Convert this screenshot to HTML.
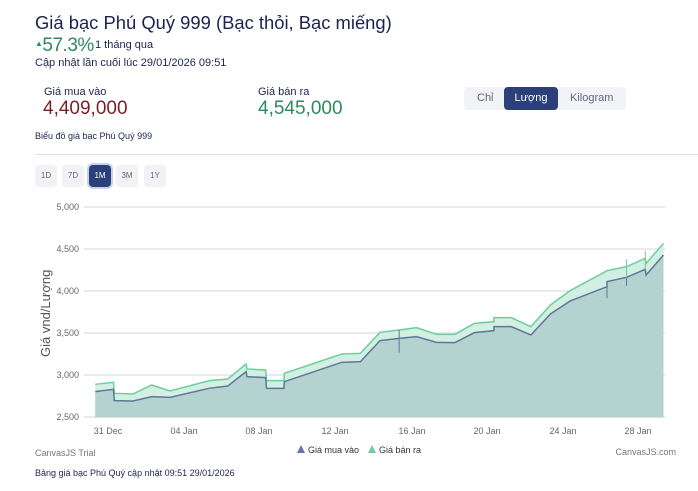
<!DOCTYPE html><html><head><meta charset="utf-8"><style>
body{margin:0;width:698px;height:491px;background:#fff;font-family:"Liberation Sans",sans-serif;color:#1c2350;position:relative;overflow:hidden}
.a{position:absolute;white-space:nowrap}
.btn{position:absolute;top:165px;width:22px;height:22px;border-radius:4px;background:#f1f2f5;font-size:8px;color:#667;text-align:center;line-height:22px}
</style></head><body>
<div class="a" style="left:35px;top:12px;font-size:18.4px;color:#1c2350">Giá bạc Phú Quý 999 (Bạc thỏi, Bạc miếng)</div>
<div class="a" style="left:35px;top:35px;font-size:19px;color:#2e8a5e;letter-spacing:-0.5px"><span style="font-size:8px;vertical-align:5px">▲</span>57.3%</div>
<div class="a" style="left:95px;top:39px;font-size:11px">1 tháng qua</div>
<div class="a" style="left:35px;top:57px;font-size:11px">Cập nhật lần cuối lúc 29/01/2026 09:51</div>
<div class="a" style="left:44px;top:86px;font-size:11px">Giá mua vào</div>
<div class="a" style="left:43px;top:98px;font-size:19px;color:#7a1f24">4,409,000</div>
<div class="a" style="left:258px;top:86px;font-size:11px">Giá bán ra</div>
<div class="a" style="left:258px;top:98px;font-size:19px;color:#2e8a5e">4,545,000</div>
<div class="a" style="left:464px;top:87px;width:162px;height:23px;background:#f2f3f6;border-radius:4px"></div>
<div class="a" style="left:477px;top:92px;font-size:11px;color:#667">Chỉ</div>
<div class="a" style="left:504px;top:87px;width:54px;height:23px;background:#2b3f7a;border-radius:4px;color:#fff;font-size:11px;text-align:center;line-height:23px">Lượng</div>
<div class="a" style="left:570px;top:92px;font-size:11px;color:#667">Kilogram</div>
<div class="a" style="left:35px;top:131px;font-size:9px">Biểu đồ giá bạc Phú Quý 999</div>
<div class="a" style="left:35px;top:154px;width:663px;height:1px;background:#dcdde3"></div>
<div class="btn" style="left:35px">1D</div><div class="btn" style="left:62px">7D</div>
<div class="btn" style="left:89px;background:#2b3f7a;color:#fff;box-shadow:0 0 0 2px #c5d0ee">1M</div>
<div class="btn" style="left:116px">3M</div><div class="btn" style="left:144px">1Y</div>
<svg class="a" style="left:0;top:0" width="698" height="491">
<g stroke="#d5d6da" stroke-width="1">
<line x1="84" x2="665" y1="207" y2="207"/><line x1="84" x2="665" y1="249" y2="249"/><line x1="84" x2="665" y1="291" y2="291"/><line x1="84" x2="665" y1="333" y2="333"/><line x1="84" x2="665" y1="375" y2="375"/><line x1="84" x2="665" y1="417" y2="417"/>
</g>
<g font-size="9" fill="#666" text-anchor="end" font-family="Liberation Sans">
<text x="79" y="210">5,000</text><text x="79" y="252">4,500</text><text x="79" y="294">4,000</text><text x="79" y="336">3,500</text><text x="79" y="378">3,000</text><text x="79" y="420">2,500</text></g>
<g font-size="9" fill="#666" text-anchor="middle"><text x="108" y="434">31 Dec</text><text x="184" y="434">04 Jan</text><text x="259" y="434">08 Jan</text><text x="335" y="434">12 Jan</text><text x="412" y="434">16 Jan</text><text x="487" y="434">20 Jan</text><text x="563" y="434">24 Jan</text><text x="638" y="434">28 Jan</text></g>
<text transform="translate(50,357) rotate(-90)" font-size="13" fill="#555">Giá vnd/Lượng</text>
<g transform="translate(20,190) scale(0.4348,0.3333)">
<polygon fill="#d3eee2" points="173,583 215,577 217,610 260,612 303,585 345,603 435,572 478,567 520,522 522,537 565,540 567,572 607,572 608,550 740,492 783,490 828,427 872,420 912,413 958,433 1000,433 1045,400 1090,395 1090,383 1130,383 1175,410 1220,345 1265,302 1350,242 1395,230 1438,205 1440,220 1480,160 1480,195 1440,255 1438,238 1395,262 1350,275 1350,290 1265,333 1220,372 1175,435 1130,410 1090,410 1090,422 1045,428 1000,458 958,457 912,440 872,445 828,452 783,515 740,517 608,575 607,595 567,595 565,563 522,560 520,545 478,588 435,595 345,622 303,620 260,633 217,632 215,598 173,605"/>
<polygon fill="#b4d2cf" points="173,683 173,605 215,598 217,632 260,633 303,620 345,622 435,595 478,588 520,545 522,560 565,563 567,595 607,595 608,575 740,517 783,515 828,452 872,445 912,440 958,457 1000,458 1045,428 1090,422 1090,410 1130,410 1175,435 1220,372 1265,333 1350,290 1350,275 1395,262 1438,238 1440,255 1480,195 1480,683"/>
<polyline fill="none" stroke="#6ccf9c" stroke-width="1.5" vector-effect="non-scaling-stroke" points="173,583 215,577 217,610 260,612 303,585 345,603 435,572 478,567 520,522 522,537 565,540 567,572 607,572 608,550 740,492 783,490 828,427 872,420 912,413 958,433 1000,433 1045,400 1090,395 1090,383 1130,383 1175,410 1220,345 1265,302 1350,242 1395,230 1438,205 1440,220 1480,160"/>
<polyline fill="none" stroke="#5f7896" stroke-width="1.5" vector-effect="non-scaling-stroke" points="173,605 215,598 217,632 260,633 303,620 345,622 435,595 478,588 520,545 522,560 565,563 567,595 607,595 608,575 740,517 783,515 828,452 872,445 912,440 958,457 1000,458 1045,428 1090,422 1090,410 1130,410 1175,435 1220,372 1265,333 1350,290 1350,275 1395,262 1438,238 1440,255 1480,195"/>
<g stroke-width="1" vector-effect="non-scaling-stroke">
<line x1="872" y1="420" x2="872" y2="488" stroke="#5f7896" vector-effect="non-scaling-stroke"/>
<line x1="1350" y1="290" x2="1350" y2="325" stroke="#5f7896" vector-effect="non-scaling-stroke"/>
<line x1="1395" y1="262" x2="1395" y2="288" stroke="#5f7896" vector-effect="non-scaling-stroke"/>
<line x1="1438" y1="182" x2="1438" y2="238" stroke="#6ccf9c" vector-effect="non-scaling-stroke"/>
<line x1="1395" y1="208" x2="1395" y2="262" stroke="#6ccf9c" vector-effect="non-scaling-stroke"/>
</g>
</g>
<polygon points="297,453 301,445 305,453" fill="#6a73a8"/><text x="308" y="453" font-size="9" fill="#333">Giá mua vào</text>
<polygon points="368,453 372,445 376,453" fill="#6ccf9c"/><text x="379" y="453" font-size="9" fill="#333">Giá bán ra</text>
<text x="35" y="456" font-size="9" fill="#777">CanvasJS Trial</text>
<text x="676" y="455" font-size="9" fill="#777" text-anchor="end">CanvasJS.com</text>
<text x="35" y="476" font-size="9" fill="#1c2350">Bảng giá bạc Phú Quý cập nhật 09:51 29/01/2026</text>
</svg>
</body></html>
